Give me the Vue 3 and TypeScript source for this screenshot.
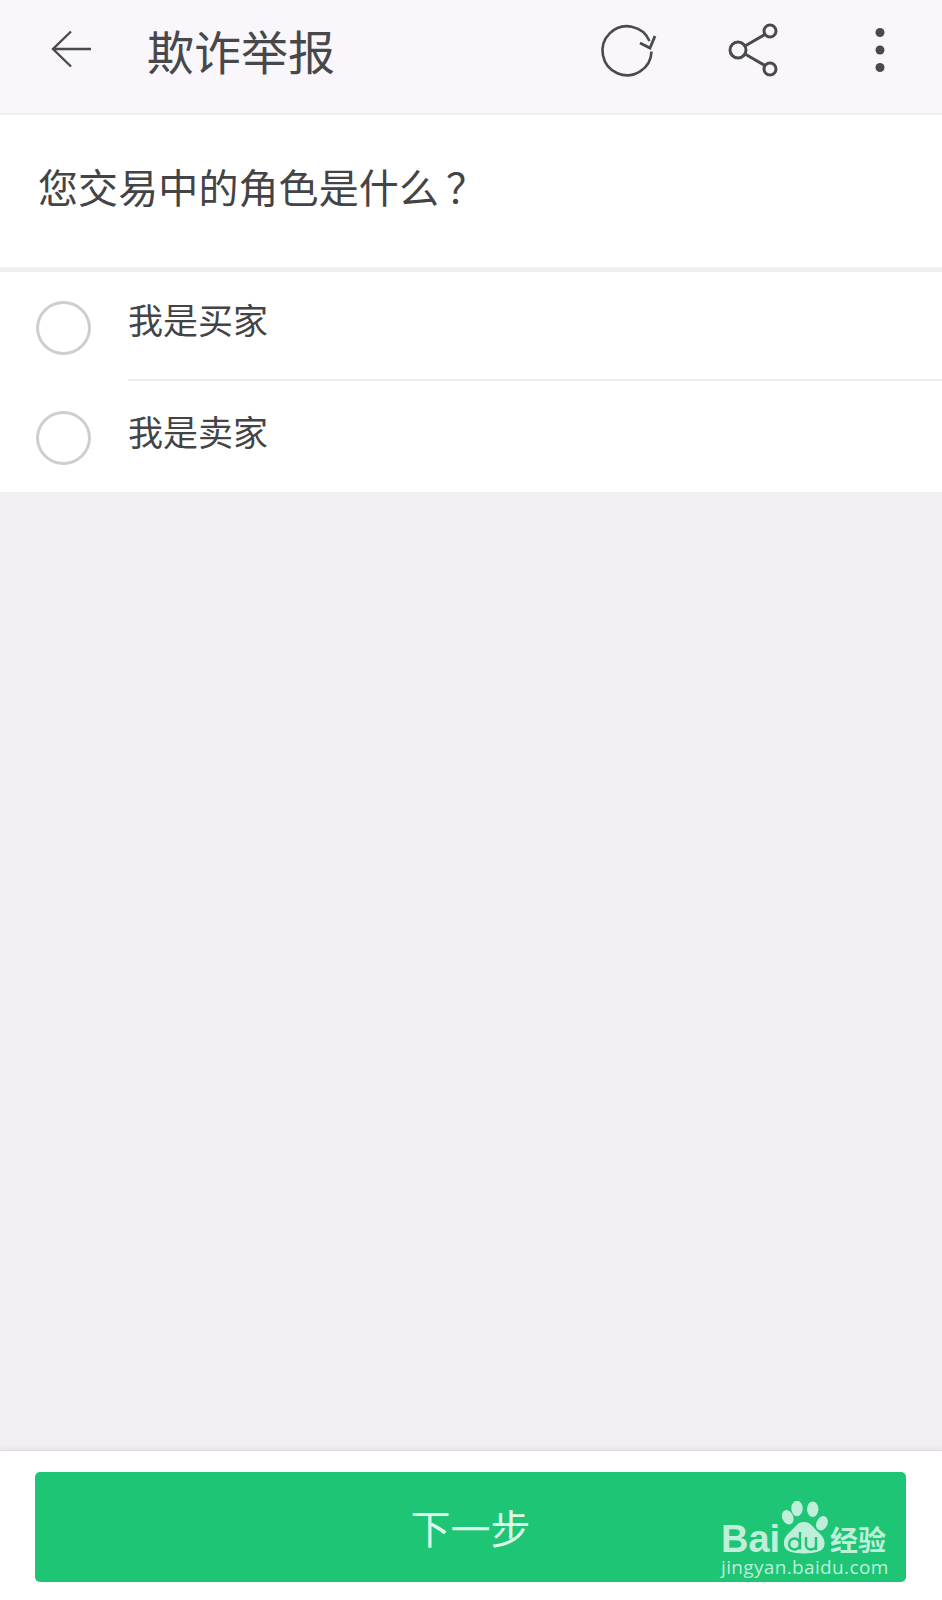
<script setup lang="ts">
const options: string[] = ['我是买家', '我是卖家']
</script>

<template>
  <div class="page">
    <header class="bar">
      <svg class="back" width="52" height="48" viewBox="0 0 52 48" fill="none" stroke="#4a4a4c" stroke-width="2.4">
        <path d="M45 24H7M25 6.500 7 24l18 17.500" />
      </svg>
      <h1 class="title">欺诈举报</h1>
      <div class="actions">
        <svg width="64" height="60" viewBox="0 0 64 60" fill="none" stroke="#4a4a4c" stroke-width="2.600">
          <path d="M54.500 31.500A24.500 24.500 0 1 1 52.500 21" />
          <path d="M43 23 53 28 58 16" stroke-width="2.800" />
        </svg>
        <svg class="share" width="60" height="60" viewBox="0 0 60 60" fill="none" stroke="#4a4a4c" stroke-width="3">
          <circle cx="14" cy="30" r="8" />
          <circle cx="46" cy="11" r="6" />
          <circle cx="46" cy="49" r="6" />
          <path d="M21 26 41 14.500M21 34 41 45.500" />
        </svg>
        <svg class="more" width="20" height="60" viewBox="0 0 20 60" fill="#4a4a4c">
          <circle cx="10" cy="12.500" r="4.500" />
          <circle cx="10" cy="30" r="4.500" />
          <circle cx="10" cy="47.500" r="4.500" />
        </svg>
      </div>
    </header>

    <section class="question">您交易中的角色是什么<span class="qmark">？</span></section>

    <ul class="options">
      <li v-for="option in options" :key="option" class="option">
        <span class="radio"></span>
        <span class="label">{{ option }}</span>
      </li>
    </ul>

    <div class="spacer"></div>

    <footer class="footer">
      <div class="next"><span>下一步</span></div>
      <div class="mark">
        <div class="mark-top">
          <span class="bai">Bai</span>
          <svg class="paw" width="48" height="54" viewBox="0 0 48 54" fill="#bfeedb">
            <ellipse cx="7.700" cy="16.300" rx="5.500" ry="7.500" transform="rotate(-25 7.700 16.300)" />
            <ellipse cx="17" cy="7.500" rx="5.700" ry="7.800" />
            <ellipse cx="32.700" cy="8.300" rx="5.700" ry="7.800" />
            <ellipse cx="42" cy="22.300" rx="5.500" ry="7.500" transform="rotate(25 42 22.300)" />
            <path d="M24 21c6 0 8 4 13 9 6 5 8 9 7.500 13.500C44 49 39 52.500 24 52.500S4.500 49 4 43.500C3.500 39 5 35 11 30c5-5 7-9 13-9Z" />
            <g fill="none" stroke="#1dc574" stroke-width="2.400">
              <circle cx="14.500" cy="43" r="5.500" />
              <path d="M20 31v17.500M26 36v8c0 6 10 6 10 0v-8M36 36v13" />
            </g>
          </svg>
          <span class="jy">经验</span>
        </div>
        <div class="url">jingyan.baidu.com</div>
      </div>
    </footer>
  </div>
</template>

<style>
html, body { margin: 0; padding: 0; background: #f1eff2; }
</style>

<style scoped>
.page {
  width: 942px;
  height: 1600px;
  display: flex;
  flex-direction: column;
  background: #f1eff2;
  font-family: "Noto Sans CJK SC", "Liberation Sans", sans-serif;
  color: #444446;
}
.bar {
  height: 113px;
  flex: none;
  display: flex;
  align-items: center;
  padding: 0 52px 0 46px;
  background: #f9f7fb;
  border-bottom: 2px solid #efedf0;
}
.back { flex: none; margin-top: -15px; }
.title {
  margin: -13px 0 0 49px;
  font-size: 47px;
  font-weight: 400;
  line-height: 60px;
  color: #48484a;
}
.actions {
  margin-left: auto;
  display: flex;
  align-items: center;
  margin-top: -14px;
}
.share { margin-left: 63px; }
.more { margin-left: 86px; }
.question {
  height: 157px;
  flex: none;
  box-sizing: border-box;
  padding: 41px 0 0 38px;
  background: #fff;
  font-size: 40px;
  letter-spacing: 0.100px;
  line-height: 60px;
  border-bottom: 5px solid #f0eef1;
}
.qmark { margin-left: 7px; }
.options {
  margin: 0;
  padding: 0;
  list-style: none;
  background: #fff;
  flex: none;
}
.option {
  display: flex;
  position: relative;
  height: 109px;
  padding-left: 36px;
  box-sizing: border-box;
}
.option:last-child { height: 111px; }
.option:first-child::after {
  content: "";
  position: absolute;
  left: 128px;
  right: 0;
  bottom: 0;
  height: 2px;
  background: #efedf0;
}
.radio {
  box-sizing: border-box;
  width: 55px;
  height: 54px;
  margin-top: 29px;
  border: 3px solid #cfcdcf;
  border-radius: 50%;
  background: #fff;
}
.label {
  margin: 20px 0 0 37px;
  font-size: 35px;
  line-height: 54px;
  color: #444446;
}
.option:last-child .label { margin-top: 23px; }
.option:last-child .radio { margin-top: 30px; }
.spacer { flex: 1; }
.footer {
  position: relative;
  flex: none;
  height: 150px;
  box-sizing: border-box;
  padding: 21px 36px 19px 35px;
  background: #fff;
  border-top: 1px solid #dedcdf;
  box-shadow: 0 -2px 4px rgba(0, 0, 0, 0.05);
}
.next {
  display: flex;
  justify-content: center;
  align-items: center;
  height: 110px;
  border-radius: 5px;
  background: #1dc574;
  color: #dcf8ea;
  font-size: 40px;
  line-height: 60px;
}
.mark {
  position: absolute;
  left: 721px;
  top: 50px;
  color: #bfeedb;
  text-align: left;
}
.mark-top { display: flex; align-items: flex-end; height: 54px; }
.bai {
  width: 59px;
  font: 700 38px/30px "Liberation Sans", sans-serif;
  margin-bottom: 1px;
}
.paw { flex: none; }
.jy {
  font: 700 28px/28px "Noto Sans CJK SC", sans-serif;
  margin-left: 2px;
  margin-bottom: 2px;
}
.url {
  font: 400 19px/22px "Open Sans", sans-serif;
  letter-spacing: 0.350px;
  margin-top: 1px;
  white-space: nowrap;
}
</style>
